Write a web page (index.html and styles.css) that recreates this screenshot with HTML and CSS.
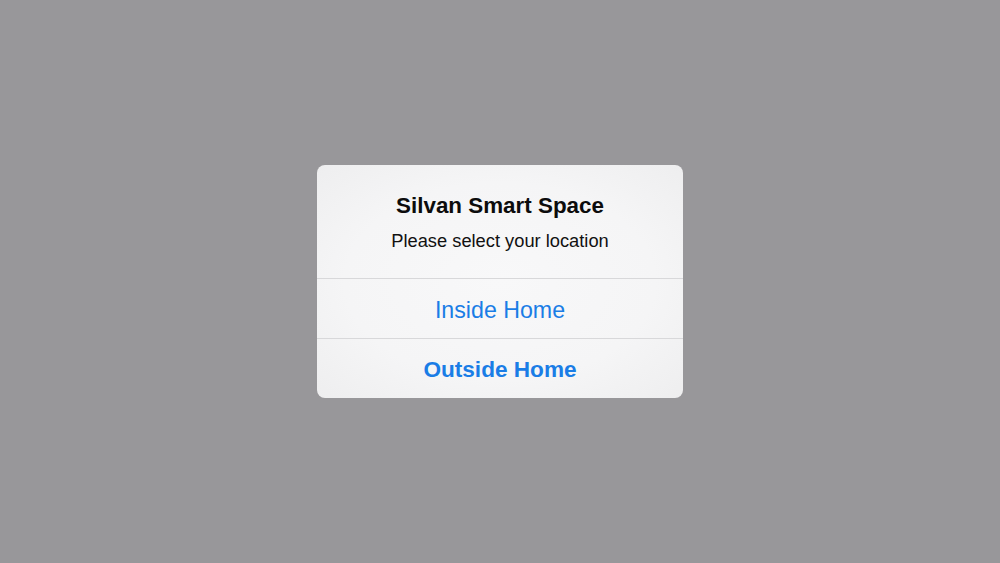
FILE: index.html
```html
<!DOCTYPE html>
<html>
<head>
<meta charset="utf-8">
<link rel="stylesheet" href="styles.css">
</head>
<body>
<div class="screen">
  <div class="alert">
    <div class="alert-head">
      <div class="alert-title">Silvan Smart Space</div>
      <div class="alert-msg">Please select your location</div>
    </div>
    <div class="alert-btn">Inside Home</div>
    <div class="alert-btn bold">Outside Home</div>
  </div>
</div>
</body>
</html>
```
FILE: styles.css
```css
html, body {
  margin: 0;
  padding: 0;
  width: 1000px;
  height: 563px;
  overflow: hidden;
}
.screen {
  width: 1000px;
  height: 563px;
  background: #98979a;
  display: flex;
  align-items: flex-start;
  justify-content: center;
  font-family: "Liberation Sans", Arial, sans-serif;
}
.alert {
  margin-top: 165px;
  width: 366px;
  height: 233px;
  border-radius: 8px;
  background: radial-gradient(ellipse at center, #f8f8f9 0%, #f5f5f6 60%, #eeeeef 100%);
  display: flex;
  flex-direction: column;
  overflow: hidden;
}
.alert-head {
  height: 113px;
  display: flex;
  flex-direction: column;
  align-items: center;
  border-bottom: 1px solid #d8d8da;
}
.alert-title {
  margin-top: 28px;
  font-size: 22.4px;
  font-weight: bold;
  color: #0c0c0c;
  line-height: 26px;
}
.alert-msg {
  margin-top: 11px;
  font-size: 18.3px;
  color: #111;
  line-height: 22px;
}
.alert-btn {
  height: 59px;
  padding-top: 4px;
  box-sizing: border-box;
  display: flex;
  align-items: center;
  justify-content: center;
  font-size: 23.2px;
  color: #1a7de6;
}
.alert-btn + .alert-btn {
  border-top: 1px solid #d8d8da;
}
.alert-btn.bold {
  font-weight: bold;
  font-size: 22.6px;
}
```
